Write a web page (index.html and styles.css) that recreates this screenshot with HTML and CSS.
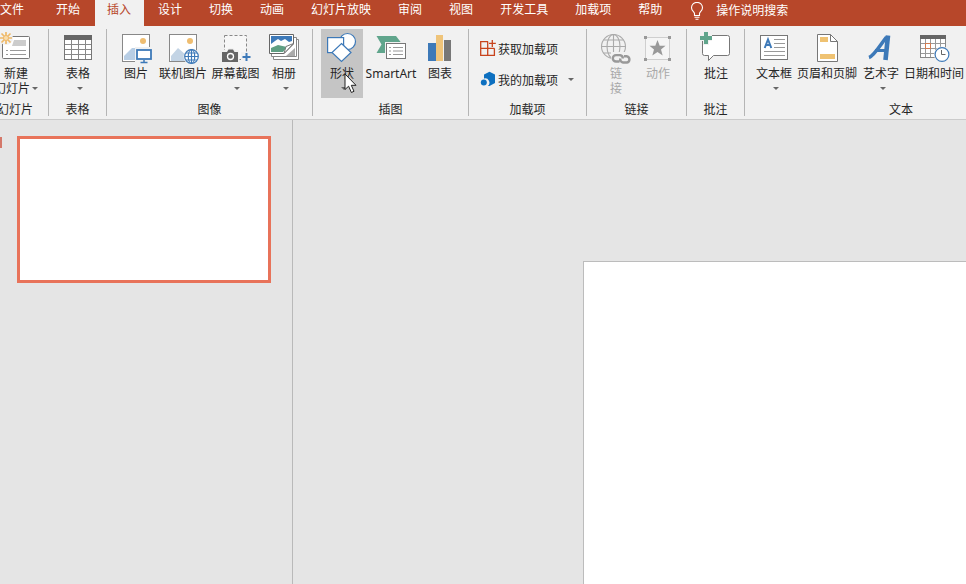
FILE: index.html
```html
<!DOCTYPE html>
<html lang="zh-CN">
<head>
    <meta charset="UTF-8">
    <meta name="viewport" content="width=device-width, initial-scale=1.0">
    <title>演示文稿</title>
    <link rel="stylesheet" href="styles.css">
</head>
<body>
    <nav class="tabs">
        <a class="tab file">文件</a>
        <a class="tab">开始</a>
        <a class="tab active">插入</a>
        <a class="tab">设计</a>
        <a class="tab">切换</a>
        <a class="tab">动画</a>
        <a class="tab">幻灯片放映</a>
        <a class="tab">审阅</a>
        <a class="tab">视图</a>
        <a class="tab">开发工具</a>
        <a class="tab">加载项</a>
        <a class="tab">帮助</a>
        <div class="search">
            <svg width="14" height="18" viewBox="0 0 14 18" fill="none" stroke="#fff" stroke-width="1.1">
                <path d="M4.500 13.500V11.500C4.500 10 1.500 8.800 1.500 5.700A5.300 5.100 0 0 1 12.500 5.700C12.500 8.800 9.500 10 9.500 11.500V13.500Z"/>
                <path d="M4.500 15.200H9.500M5.500 17.200H8.500"/>
            </svg>
            <span>操作说明搜索</span>
        </div>
    </nav>

    <div class="ribbon">
        <!-- 幻灯片 -->
        <section class="group g-slides">
            <div class="items">
                <button class="btn w-new">
                    <svg class="icon" viewBox="0 0 34 32">
                        <rect x="3.500" y="3.500" width="27" height="22" rx="1" fill="#fff" stroke="#777"/>
                        <path d="M15 7H27V13H13Z" fill="#ccc"/>
                        <path d="M7 17.500H9M11 17.500H27M7 21.500H9M11 21.500H27" stroke="#999"/>
                        <circle cx="7" cy="5" r="7" fill="#f1f1f1"/>
                        <path d="M7 -1V11M1 5H13M2.500 .500L11.500 9.500M11.500 .500L2.500 9.500" stroke="#efb968" stroke-width="1.700"/>
                        <circle cx="7" cy="5" r="2.500" fill="#f8ddb0" stroke="#efb968"/>
                    </svg>
                    <span>新建</span>
                    <span class="line2">幻灯片<i class="arrow"></i></span>
                </button>
            </div>
            <div class="title">幻灯片</div>
        </section>

        <!-- 表格 -->
        <section class="group g-table">
            <div class="items">
                <button class="btn">
                    <svg class="icon" viewBox="0 0 34 32">
                        <rect x="3.500" y="2.500" width="27" height="24" fill="#fff" stroke="#777"/>
                        <path d="M3 2H31V7H3Z" fill="#666"/>
                        <path d="M10.500 7V26M17.500 7V26M24.500 7V26M4 11.500H30M4 16.500H30M4 21.500H30" stroke="#888"/>
                    </svg>
                    <span>表格</span>
                    <i class="arrow"></i>
                </button>
            </div>
            <div class="title">表格</div>
        </section>

        <!-- 图像 -->
        <section class="group g-image">
            <div class="items">
                <button class="btn w44">
                    <svg class="icon" viewBox="0 0 34 32">
                        <rect x="3.500" y="1.500" width="27" height="27" fill="#fff" stroke="#888"/>
                        <circle cx="24" cy="8" r="3" fill="#efbd70"/>
                        <path d="M5 27V23L13 15H17V27Z" fill="#b8cee5"/>
                        <rect x="16" y="14" width="18" height="17" fill="#f1f1f1"/>
                        <rect x="18" y="17" width="14" height="9" fill="#fff" stroke="#3d79b8" stroke-width="1.800"/>
                        <path d="M25 27V30M21.500 29.500H28.500" stroke="#3d79b8" stroke-width="1.500"/>
                    </svg>
                    <span>图片</span>
                </button>
                <button class="btn w50">
                    <svg class="icon" viewBox="0 0 34 32">
                        <rect x="3.500" y="1.500" width="27" height="27" fill="#fff" stroke="#888"/>
                        <circle cx="24" cy="8" r="3" fill="#efbd70"/>
                        <path d="M5 28V23L12 15L20 22V28Z" fill="#c3d4e5"/>
                        <circle cx="25.500" cy="23.500" r="8" fill="#f1f1f1"/>
                        <g fill="#fff" stroke="#3d79b8" stroke-width="1.200">
                            <circle cx="25.500" cy="23.500" r="6.800"/>
                            <ellipse cx="25.500" cy="23.500" rx="3.200" ry="6.800"/>
                            <path d="M25.500 17V30M19 23.500H32M20 20H31M20 27H31"/>
                        </g>
                    </svg>
                    <span>联机图片</span>
                </button>
                <button class="btn w55">
                    <svg class="icon" viewBox="0 0 34 32">
                        <rect x="5.500" y="2.500" width="22" height="24" fill="#f7f7f7" stroke="#888" stroke-dasharray="3 2"/>
                        <path d="M2 17H8L10 15H14L16 17H20V30H2Z" fill="#f1f1f1"/>
                        <path d="M3 19H8L9.500 16.500H14L15.500 19H19V29H3Z" fill="#666"/>
                        <circle cx="11.500" cy="23.500" r="3" fill="#666" stroke="#fff" stroke-width="1.300"/>
                        <path d="M22 19H34V30H22Z" fill="#f1f1f1"/>
                        <path d="M27.500 20V28M23.500 24H31.500" stroke="#3d79b8" stroke-width="2"/>
                    </svg>
                    <span>屏幕截图</span>
                    <i class="arrow"></i>
                </button>
                <button class="btn">
                    <svg class="icon" viewBox="0 0 34 32">
                        <path d="M6.500 6.500H31.500V26.500H6.500Z" fill="#fff" stroke="#888"/>
                        <path d="M4.500 4.500H29.500V23.500H4.500Z" fill="#fff" stroke="#888"/>
                        <path d="M19 23L28 15V23Z" fill="#aaa"/>
                        <path d="M2.500 1.500H26.500V11L17 20.500H2.500Z" fill="#fff" stroke="#666"/>
                        <path d="M4 3H25V12L16 13L4 14Z" fill="#3d79b8"/>
                        <path d="M4 11L8 8L11 6L14 8L18 6L22 9L25 8V12L18 14H4Z" fill="#fff"/>
                        <path d="M4 15L11 12L20 14L16 19H4Z" fill="#5f9f83"/>
                        <path d="M17 20.500L19 13.500L26.500 10.500Z" fill="#fff" stroke="#777"/>
                    </svg>
                    <span>相册</span>
                    <i class="arrow"></i>
                </button>
            </div>
            <div class="title">图像</div>
        </section>

        <!-- 插图 -->
        <section class="group g-illus">
            <div class="items">
                <button class="btn pressed">
                    <svg class="icon" viewBox="0 0 34 32" fill="#fff" stroke="#3d79b8" stroke-width="1.200">
                        <circle cx="22.500" cy="8.500" r="8"/>
                        <rect x="2.600" y="4.600" width="16" height="15"/>
                        <path d="M16.500 10.500L26 19.500L16.500 28.500L7 19.500Z"/>
                    </svg>
                    <span>形状</span>
                    <i class="arrow"></i>
                    <svg class="cursor" width="14" height="21" viewBox="0 0 14 21">
                        <path d="M1 1V16.500L4.600 13.200L7.400 19.500L10 18.300L7.300 12.300H12Z" fill="#fff" stroke="#222"/>
                    </svg>
                </button>
                <button class="btn w56">
                    <svg class="icon" viewBox="0 0 34 32">
                        <path d="M2.500 3H22L27 9.500V17H12V20H2.500L7.500 11.500Z" fill="#60a58c"/>
                        <rect x="11" y="9" width="22" height="18" fill="#f1f1f1"/>
                        <rect x="12.500" y="10.500" width="19" height="15" fill="#fff" stroke="#777"/>
                        <path d="M15 14.500H17M19 14.500H29M15 18H17M19 18H29M15 21.500H17M19 21.500H29" stroke="#999"/>
                    </svg>
                    <span class="latin">SmartArt</span>
                </button>
                <button class="btn">
                    <svg class="icon" viewBox="0 0 34 32">
                        <path d="M5 10H13V28H5Z" fill="#3d79b8"/>
                        <path d="M13 2H20V28H13Z" fill="#efc47a"/>
                        <path d="M21 7H28V28H21Z" fill="#777"/>
                    </svg>
                    <span>图表</span>
                </button>
            </div>
            <div class="title">插图</div>
        </section>

        <!-- 加载项 -->
        <section class="group g-addins">
            <div class="items rows">
                <button class="row">
                    <svg width="16" height="16" viewBox="0 0 16 16" fill="none" stroke="#c8431c" stroke-width="1.300">
                        <path d="M8 1.600H.700V15.300H14.400V8.300M.700 8.300H14.400M7.700 1.600V15.300M12.300 0V7M9 3.300H15.800"/>
                    </svg>
                    <span>获取加载项</span>
                </button>
                <button class="row">
                    <svg width="16" height="16" viewBox="0 0 16 16">
                        <path d="M4 3.500L9.500 .800L15 3.500V12L9.500 15H7.800A4.300 4.300 0 0 0 4 7.500Z" fill="#0d70c0"/>
                        <circle cx="3.800" cy="11.500" r="3" fill="#0d70c0"/>
                    </svg>
                    <span>我的加载项</span>
                    <i class="arrow"></i>
                </button>
            </div>
            <div class="title">加载项</div>
        </section>

        <!-- 链接 -->
        <section class="group g-link">
            <div class="items">
                <button class="btn disabled">
                    <svg class="icon" viewBox="0 0 34 32" fill="none" stroke="#aaa" stroke-width="1.100">
                        <circle cx="14.500" cy="13.500" r="12"/>
                        <ellipse cx="14.500" cy="13.500" rx="6.500" ry="12"/>
                        <path d="M14.500 1.500V25.500M2.500 13.500H26.500M4.500 7H24.500M4.500 20H24.500"/>
                        <path d="M12 19H34V32H12Z" fill="#f1f1f1" stroke="none"/>
                        <path d="M20.500 28.500H17A3.200 3.200 0 0 1 17 22.100H21A3.200 3.200 0 0 1 23.800 25.500M25 23.300H28A3.200 3.200 0 0 1 28 29.500H24A3.200 3.200 0 0 1 21.300 25.500" stroke="#999" stroke-width="2.400"/>
                    </svg>
                    <span>链</span>
                    <span class="line2">接</span>
                </button>
                <button class="btn disabled">
                    <svg class="icon" viewBox="0 0 34 32">
                        <rect x="4.500" y="4.500" width="24" height="22" fill="#f5f5f5" stroke="#aaa" stroke-dasharray="1 1"/>
                        <path d="M3 3H6V6H3ZM27 3H30V6H27ZM3 25H6V28H3ZM27 25H30V28H27Z" fill="#999"/>
                        <path d="M16.500 7L18.700 12.700H24.500L20 16.500L21.700 22.500L16.500 19L11.300 22.500L13 16.500L8.500 12.700H14.300Z" fill="#999"/>
                    </svg>
                    <span>动作</span>
                </button>
            </div>
            <div class="title">链接</div>
        </section>

        <!-- 批注 -->
        <section class="group g-comment">
            <div class="items">
                <button class="btn">
                    <svg class="icon" viewBox="0 0 34 32">
                        <path d="M5.500 2.500H28.500Q30.500 2.500 30.500 4.500V20.500Q30.500 22.500 28.500 22.500H14.500L9.500 27.500V22.500H5.500Q3.500 22.500 3.500 20.500V4.500Q3.500 2.500 5.500 2.500Z" fill="#fff" stroke="#777"/>
                        <path d="M0 -1H13V8H10V12H4V8H0Z" fill="#f1f1f1"/>
                        <path d="M7 -1V11M1 5H13" stroke="#60a58c" stroke-width="4"/>
                    </svg>
                    <span>批注</span>
                </button>
            </div>
            <div class="title">批注</div>
        </section>

        <!-- 文本 -->
        <section class="group g-text">
            <div class="items">
                <button class="btn">
                    <svg class="icon" viewBox="0 0 34 32">
                        <rect x="3.500" y="2.500" width="27" height="24" fill="#fff" stroke="#777"/>
                        <path d="M7.700 15L11 6.500L14.300 15M9 12H13" fill="none" stroke="#3d79b8" stroke-width="2"/>
                        <path d="M17 6.500H28M17 10.500H28M17 14.500H28M7 18.500H28M7 22.500H28" stroke="#999"/>
                    </svg>
                    <span>文本框</span>
                    <i class="arrow"></i>
                </button>
                <button class="btn w64">
                    <svg class="icon" viewBox="0 0 34 32">
                        <path d="M7.500 1.500H20.500L27.500 8.500V28.500H7.500Z" fill="#fff" stroke="#777"/>
                        <path d="M10 4H18V9H10ZM10 21H25V26H10Z" fill="#efc272"/>
                        <path d="M20.500 1.500V8.500H27.500" fill="none" stroke="#777"/>
                    </svg>
                    <span>页眉和页脚</span>
                </button>
                <button class="btn w44">
                    <svg class="icon" viewBox="0 0 34 32" fill="none" stroke="#3d79b8">
                        <path d="M5 24.500C10 23 17 11 22.500 4" stroke-width="3.600"/>
                        <path d="M24 2.500L21.500 27" stroke-width="4.600"/>
                        <path d="M11 17.500H21" stroke-width="3"/>
                    </svg>
                    <span>艺术字</span>
                    <i class="arrow"></i>
                </button>
                <button class="btn w62">
                    <svg class="icon" viewBox="0 0 34 32">
                        <rect x="3.500" y="2.500" width="25" height="22" fill="#fff" stroke="#888"/>
                        <path d="M3 2H29V6H3Z" fill="#666"/>
                        <path d="M8.500 6V24M13.500 6V24M18.500 6V24M23.500 6V24M4 10.500H28M4 15.500H28M4 20.500H28" stroke="#999"/>
                        <rect x="8.500" y="10.500" width="5" height="5" fill="#fff" stroke="#d27b50"/>
                        <circle cx="25" cy="21.500" r="8" fill="#f1f1f1"/>
                        <circle cx="25" cy="21.500" r="6.900" fill="#fff" stroke="#3d79b8" stroke-width="1.200"/>
                        <path d="M24.500 17V21.500H28.500" fill="none" stroke="#666"/>
                    </svg>
                    <span>日期和时间</span>
                </button>
            </div>
            <div class="title">文本</div>
        </section>
    </div>

    <main class="workspace">
        <aside class="thumbs">
            <div class="number"></div>
            <div class="thumb"></div>
        </aside>
        <div class="editor">
            <div class="slide"></div>
        </div>
    </main>
</body>
</html>
```
FILE: styles.css
```css
* {
    margin: 0;
    padding: 0;
    box-sizing: border-box;
}

body {
    width: 966px;
    height: 584px;
    overflow: hidden;
    display: flex;
    flex-direction: column;
    background-color: #e5e5e5;
    color: #262626;
    font-family: "Noto Sans CJK SC", sans-serif;
    font-size: 12px;
    line-height: 15px;
}

/* 选项卡 */
.tabs {
    display: flex;
    gap: 2px;
    height: 26px;
    flex-shrink: 0;
    background-color: #b7472a;
    color: #fff;
}

.tab {
    padding: 1px 13px 0 12px;
    white-space: nowrap;
}

.tab.file {
    padding-left: 0;
    width: 42px;
}

.tab.active {
    background-color: #f1f1f1;
    color: #b7472a;
}

.search {
    display: flex;
    gap: 12px;
    padding: 2px 0 0 13px;
}

/* 功能区 */
.ribbon {
    display: flex;
    height: 94px;
    flex-shrink: 0;
    padding-top: 3px;
    background-color: #f1f1f1;
    border-bottom: 1px solid #cbcbcb;
}

.group {
    display: flex;
    flex-direction: column;
    flex-shrink: 0;
    height: 87px;
    border-right: 1px solid #b5b5b5;
}

.items {
    display: flex;
    flex-shrink: 0;
    height: 69px;
    padding-left: 8px;
}

.title {
    padding-top: 3px;
    text-align: center;
}

.g-slides {
    width: 67px;
    margin-left: -18px;
}

.g-slides .items {
    padding-left: 2px;
}

.g-table,
.g-comment {
    width: 58px;
}

.g-image {
    width: 206px;
}

.g-image .items {
    padding-left: 7px;
}

.g-illus {
    width: 156px;
}

.g-addins {
    width: 118px;
}

.g-link {
    width: 100px;
}

.g-text {
    width: 221px;
    border-right: none;
}

.g-text .title {
    padding-left: 91px;
}

button {
    border: none;
    background: none;
    color: inherit;
    font: inherit;
}

.btn {
    position: relative;
    display: flex;
    flex-direction: column;
    align-items: center;
    flex-shrink: 0;
    width: 42px;
    height: 69px;
    padding-top: 4px;
    white-space: nowrap;
}

.icon {
    width: 34px;
    height: 32px;
    flex-shrink: 0;
    overflow: visible;
}

.w44 { width: 44px; }
.w50 { width: 50px; }
.w55 { width: 55px; }
.w56 { width: 56px; }
.w62 { width: 62px; }
.w64, .w-new { width: 64px; }

.btn.pressed {
    background-color: #c5c5c5;
}

.btn.disabled {
    color: #a8a8a8;
}

.latin {
    padding-top: 1px;
    font-family: "Noto Sans", sans-serif;
    font-size: 12px;
}

.arrow {
    width: 0;
    height: 0;
    border: 3px solid transparent;
    border-top-color: #666;
    border-bottom: none;
}

.btn > .arrow {
    margin: 7px 0 0 3px;
}

.line2 {
    display: flex;
    align-items: center;
    gap: 2px;
}

.line2 .arrow {
    margin-top: 2px;
}

.cursor {
    position: absolute;
    left: 23px;
    top: 44px;
}

.items.rows {
    flex-direction: column;
    gap: 15px;
    padding: 11px 0 0 11px;
}

.row {
    display: flex;
    align-items: center;
    gap: 2px;
    height: 16px;
    white-space: nowrap;
}

.row .arrow {
    margin-left: 8px;
}

/* 工作区 */
.workspace {
    display: flex;
    flex: 1;
}

.thumbs {
    display: flex;
    gap: 15px;
    width: 293px;
    padding-top: 16px;
    border-right: 1px solid #b9b9b9;
}

.number {
    width: 2px;
    height: 11px;
    margin-top: 1px;
    background-color: #d4786a;
}

.thumb {
    width: 254px;
    height: 147px;
    background-color: #fff;
    border: 3px solid #e8735a;
}

.editor {
    display: flex;
    flex: 1;
    padding: 141px 0 0 290px;
}

.slide {
    flex: 1;
    background-color: #fff;
    border-top: 1px solid #bcbcbc;
    border-left: 1px solid #bcbcbc;
}
```
